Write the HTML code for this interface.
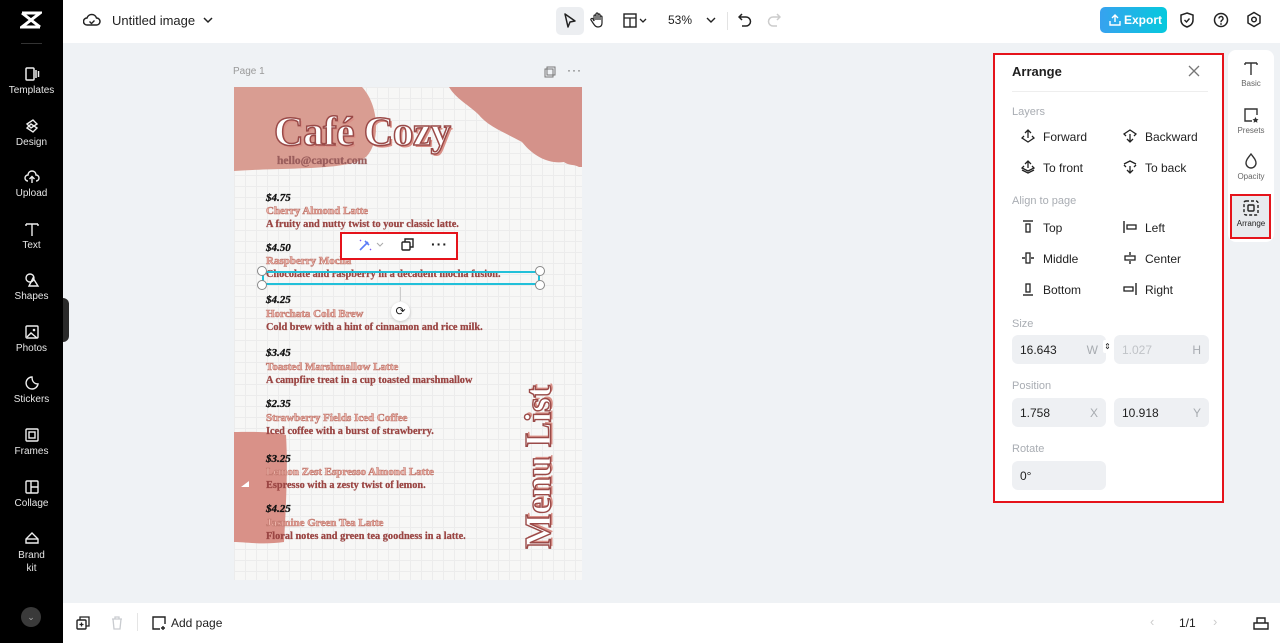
<!DOCTYPE html>
<html><head><meta charset="utf-8"><style>
*{margin:0;padding:0;box-sizing:border-box}
body{width:1280px;height:643px;overflow:hidden;background:#eff2f5;font-family:"Liberation Sans",sans-serif;position:relative;color:#1f1f1f}
.abs{position:absolute}
.side{left:0;top:0;width:63px;height:643px;background:#000}
.si{position:absolute;left:0;width:63px;text-align:center;color:#e6e6e6;font-size:10px}
.si svg{display:block;margin:0 auto 3px}
.top{left:63px;top:0;width:1217px;height:43px;background:#fff}
.bot{left:63px;top:603px;width:1217px;height:40px;background:#fff}
.page{left:234px;top:87px;width:348px;height:493px;background-color:#f7f7f6;
background-image:linear-gradient(#ececec 1px,transparent 1px),linear-gradient(90deg,#ececec 1px,transparent 1px);background-size:11px 11px;overflow:hidden}
.sf{font-family:"Liberation Serif","DejaVu Serif",serif;font-weight:bold}
.pr{position:absolute;left:32px;font-size:11px;font-style:italic;color:#111;-webkit-text-stroke:.3px #111}
.nm{position:absolute;left:32px;font-size:11px;color:#f0b6ac;-webkit-text-stroke:.6px #c27a70}
.ds{position:absolute;left:32px;font-size:10.3px;color:#9a4543;-webkit-text-stroke:.25px #9a4543}
.pn{position:absolute;left:993px;top:53px;width:231px;height:450px;border:2px solid #e5131b;background:#fff}
.lbl{position:absolute;left:17px;font-size:11px;color:#a9adb3}
.it{position:absolute;font-size:12px;color:#1f1f1f}
.it svg{position:absolute;left:-22px;top:-1px}
.fld{position:absolute;height:29px;background:#eef0f3;border-radius:6px;font-size:12px;padding:8px 0 0 8px}
.fld i{position:absolute;right:8px;top:8px;font-style:normal;color:#a7abb0}
.tab{position:absolute;left:1230px;width:42px;text-align:center;font-size:8px;color:#666}
</style></head><body>
<div class="abs side">
 <svg class="abs" style="left:20px;top:11px" width="22" height="18" viewBox="0 0 22 18"><path d="M2 2h18L2 16h18M2 2l18 14M20 2L2 16" stroke="#fff" stroke-width="3" fill="none"/></svg>
 <div class="abs" style="left:21px;top:43px;width:21px;height:1px;background:#333"></div>
 <div class="si" style="top:66px"><svg width="16" height="16"><rect x="2" y="2" width="8" height="12" rx="1" stroke="#eee" fill="none" stroke-width="1.5"/><path d="M12 4v8M14.5 5v6" stroke="#eee" stroke-width="1.5"/></svg>Templates</div>
 <div class="si" style="top:118px"><svg width="16" height="16"><path d="M3 6l6-4 4 4-6 4zM3 10l6 4 4-4-6-4z" stroke="#eee" fill="none" stroke-width="1.4"/></svg>Design</div>
 <div class="si" style="top:169px"><svg width="16" height="16"><path d="M4 12a3 3 0 010-6 4 4 0 018 0 3 3 0 010 6M8 14V8M5.5 10L8 7.5 10.5 10" stroke="#eee" fill="none" stroke-width="1.4"/></svg>Upload</div>
 <div class="si" style="top:221px"><svg width="16" height="16"><path d="M2 3h12M8 3v12M2 3v2M14 3v2" stroke="#eee" fill="none" stroke-width="1.4"/></svg>Text</div>
 <div class="si" style="top:272px"><svg width="16" height="16"><circle cx="6" cy="6" r="4" stroke="#eee" fill="none" stroke-width="1.4"/><path d="M9 6l5 8H5z" stroke="#eee" fill="none" stroke-width="1.4"/></svg>Shapes</div>
 <div class="si" style="top:324px"><svg width="16" height="16"><rect x="2" y="2" width="12" height="12" rx="1" stroke="#eee" fill="none" stroke-width="1.4"/><path d="M3 13l4-4 6 5" stroke="#eee" fill="none" stroke-width="1.4"/><circle cx="10" cy="6" r="1.3" fill="#eee"/></svg>Photos</div>
 <div class="si" style="top:375px"><svg width="16" height="16"><path d="M14 9A6 6 0 118 2c0 4 2 7 6 7z" stroke="#eee" fill="none" stroke-width="1.4"/></svg>Stickers</div>
 <div class="si" style="top:427px"><svg width="16" height="16"><rect x="2" y="2" width="12" height="12" rx="1" stroke="#eee" fill="none" stroke-width="1.4"/><rect x="5" y="5" width="6" height="6" stroke="#eee" fill="none" stroke-width="1.4"/></svg>Frames</div>
 <div class="si" style="top:479px"><svg width="16" height="16"><rect x="2" y="2" width="12" height="12" rx="1" stroke="#eee" fill="none" stroke-width="1.4"/><path d="M7 2v12M7 8h7" stroke="#eee" stroke-width="1.4"/></svg>Collage</div>
 <div class="si" style="top:530px;line-height:13px"><svg width="16" height="16"><path d="M2 13V9l6-6 6 6v4z" stroke="#eee" fill="none" stroke-width="1.4"/><path d="M2 9h12" stroke="#eee" stroke-width="1.4"/></svg>Brand<br>kit</div>
 <div class="abs" style="left:21px;top:607px;width:20px;height:20px;border-radius:50%;background:#3a3a3a;color:#aaa;font-size:9px;text-align:center;line-height:20px">⌄</div>
</div>
<div class="abs" style="left:63px;top:298px;width:6px;height:44px;background:#2a2a2a;border-radius:0 6px 6px 0"></div>
<div class="abs top">
 <svg class="abs" style="left:20px;top:12px" width="18" height="16"><path d="M4 13a3.5 3.5 0 010-7 5 5 0 019.5 0 3.5 3.5 0 010 7z" stroke="#222" fill="none" stroke-width="1.5"/><path d="M6.5 9.5l2 2 3-3" stroke="#222" fill="none" stroke-width="1.4"/></svg>
 <div class="abs" style="left:49px;top:13px;font-size:13px">Untitled image</div>
 <svg class="abs" style="left:140px;top:16px" width="10" height="8"><path d="M1 2l4 4 4-4" stroke="#222" fill="none" stroke-width="1.5"/></svg>
 <div class="abs" style="left:493px;top:7px;width:28px;height:28px;background:#eceef1;border-radius:5px"></div>
 <svg class="abs" style="left:499px;top:12px" width="16" height="18"><path d="M3 2l10 7-5 1-2 5z" stroke="#222" fill="none" stroke-width="1.5" stroke-linejoin="round"/></svg>
 <svg class="abs" style="left:527px;top:11px" width="16" height="18"><path d="M4 10V5a1 1 0 012 0v4V3a1 1 0 012 0v6V4a1 1 0 012 0v5-3a1 1 0 012 0v6c0 3-2 4-4 4s-3-1-5-4l-2-3a1 1 0 012-1z" stroke="#222" fill="none" stroke-width="1.2"/></svg>
 <svg class="abs" style="left:560px;top:13px" width="26" height="16"><rect x="1" y="1" width="12" height="13" stroke="#222" fill="none" stroke-width="1.4"/><path d="M1 5h12M7 5v9M17 6l3 3 3-3" stroke="#222" fill="none" stroke-width="1.3"/></svg>
 <div class="abs" style="left:605px;top:13px;font-size:12px">53%</div>
 <svg class="abs" style="left:643px;top:17px" width="10" height="8"><path d="M1 1l4 4 4-4" stroke="#222" fill="none" stroke-width="1.4"/></svg>
 <div class="abs" style="left:664px;top:12px;width:1px;height:18px;background:#e3e3e3"></div>
 <svg class="abs" style="left:675px;top:12px" width="14" height="16"><path d="M4 2L1 5l3 3M1 5h7a4.5 4.5 0 010 9H4" stroke="#222" fill="none" stroke-width="1.5"/></svg>
 <svg class="abs" style="left:704px;top:12px" width="14" height="16"><path d="M10 2l3 3-3 3M13 5H6a4.5 4.5 0 000 9h4" stroke="#ccc" fill="none" stroke-width="1.5"/></svg>
 <div class="abs" style="left:1037px;top:7px;width:67px;height:26px;border-radius:5px;background:linear-gradient(90deg,#37a2ef,#05c9dd);color:#fff;font-size:12px;font-weight:bold;padding:6px 0 0 24px">Export</div>
 <svg class="abs" style="left:1046px;top:13px" width="12" height="14"><path d="M6 9V2M3 5l3-3 3 3M1 8v4h10V8" stroke="#fff" fill="none" stroke-width="1.4"/></svg>
 <svg class="abs" style="left:1116px;top:11px" width="16" height="18"><path d="M8 2l6 2v5c0 4-3 6-6 7-3-1-6-3-6-7V4z" stroke="#222" fill="none" stroke-width="1.5"/><path d="M5.5 9l2 2 3-3.5" stroke="#222" fill="none" stroke-width="1.4"/></svg>
 <svg class="abs" style="left:1150px;top:12px" width="16" height="16"><circle cx="8" cy="8" r="6.5" stroke="#222" fill="none" stroke-width="1.5"/><path d="M6 6.5a2 2 0 113 1.7c-1 .5-1 1-1 2" stroke="#222" fill="none" stroke-width="1.4"/><circle cx="8" cy="12" r=".9" fill="#222"/></svg>
 <svg class="abs" style="left:1183px;top:11px" width="16" height="18"><path d="M8 1.5l6 3.5v7l-6 3.5-6-3.5V5z" stroke="#222" fill="none" stroke-width="1.5"/><circle cx="8" cy="8.5" r="2.3" stroke="#222" fill="none" stroke-width="1.5"/></svg>
</div>
<div class="abs" style="left:233px;top:66px;font-size:10px;color:#999">Page 1</div>
<svg class="abs" style="left:544px;top:66px" width="12" height="12"><rect x="1" y="3" width="8" height="8" stroke="#777" fill="none"/><rect x="3" y="1" width="8" height="8" stroke="#777" fill="none"/></svg>
<div class="abs" style="left:567px;top:63px;font-size:12px;color:#555;letter-spacing:1px">···</div>
<div class="abs page">
 <svg class="abs" style="left:0;top:0" width="348" height="493">
  <path d="M0 0H128C145 18 147 55 132 70 112 84 60 80 0 84Z" fill="#d99d92"/>
  <path d="M215 0H348V80H345C340 77 335 79 330 75 315 77 300 70 288 55 270 45 255 40 245 28 235 18 222 12 215 0Z" fill="#d4928a"/>
  <path d="M0 345C15 345 35 344 52 348 54 380 52 420 50 455 30 458 10 455 0 455Z" fill="#d99188"/>
  <path d="M7 400l8 -6v6z" fill="#fff"/>
 </svg>
 <div class="abs sf" style="left:40px;top:20px;font-size:41px;color:#fff;-webkit-text-stroke:1.5px #9a4a48;text-shadow:2px 2px 0 #d98f86;letter-spacing:-.5px">Café Cozy</div>
 <div class="abs sf" style="left:43px;top:68px;font-size:11.5px;color:#9a5d5c;-webkit-text-stroke:.3px #9a5d5c">hello@capcut.com</div>
 <div class="pr sf" style="top:105px">$4.75</div><div class="nm sf" style="top:118px">Cherry Almond Latte</div><div class="ds sf" style="top:132px">A fruity and nutty twist to your classic latte.</div>
 <div class="pr sf" style="top:155px">$4.50</div><div class="nm sf" style="top:168px">Raspberry Mocha</div><div class="ds sf" style="top:182px">Chocolate and raspberry in a decadent mocha fusion.</div>
 <div class="pr sf" style="top:207px">$4.25</div><div class="nm sf" style="top:221px">Horchata Cold Brew</div><div class="ds sf" style="top:235px">Cold brew with a hint of cinnamon and rice milk.</div>
 <div class="pr sf" style="top:260px">$3.45</div><div class="nm sf" style="top:274px">Toasted Marshmallow Latte</div><div class="ds sf" style="top:288px">A campfire treat in a cup toasted marshmallow</div>
 <div class="pr sf" style="top:311px">$2.35</div><div class="nm sf" style="top:325px">Strawberry Fields Iced Coffee</div><div class="ds sf" style="top:339px">Iced coffee with a burst of strawberry.</div>
 <div class="pr sf" style="top:366px">$3.25</div><div class="nm sf" style="top:379px">Lemon Zest Espresso Almond Latte</div><div class="ds sf" style="top:393px">Espresso with a zesty twist of lemon.</div>
 <div class="pr sf" style="top:416px">$4.25</div><div class="nm sf" style="top:430px">Jasmine Green Tea Latte</div><div class="ds sf" style="top:444px">Floral notes and green tea goodness in a latte.</div>
 <div class="abs sf" style="left:305px;top:380px;transform:translate(-50%,-50%) rotate(-90deg);white-space:nowrap;font-size:37px;color:#fff;-webkit-text-stroke:1.4px #9a4a48;text-shadow:2px 2px 0 #d98f86">Menu List</div>
</div>
<div class="abs" style="left:262px;top:271px;width:278px;height:14px;border:2px solid #22c0d9"></div>
<div class="abs" style="left:257px;top:266px;width:10px;height:10px;border-radius:50%;background:#fff;border:1px solid #888"></div>
<div class="abs" style="left:535px;top:266px;width:10px;height:10px;border-radius:50%;background:#fff;border:1px solid #888"></div>
<div class="abs" style="left:257px;top:280px;width:10px;height:10px;border-radius:50%;background:#fff;border:1px solid #888"></div>
<div class="abs" style="left:535px;top:280px;width:10px;height:10px;border-radius:50%;background:#fff;border:1px solid #888"></div>
<div class="abs" style="left:400px;top:287px;width:1px;height:14px;background:#ccc"></div>
<div class="abs" style="left:391px;top:302px;width:19px;height:19px;border-radius:50%;background:#fff;box-shadow:0 1px 3px rgba(0,0,0,.2);font-size:12px;text-align:center;line-height:19px">⟳</div>
<div class="abs" style="left:340px;top:232px;width:118px;height:28px;border:2px solid #e5131b;background:#fff"></div>
<svg class="abs" style="left:357px;top:237px" width="28" height="16"><path d="M3 13L11 5M8 4l4 4" stroke="#5b7cf7" stroke-width="1.6" fill="none"/><path d="M3 3l1 1M13 12l1 1" stroke="#7b5cf7" stroke-width="1.4"/><path d="M20 6l3 3 3-3" stroke="#aaa" fill="none"/></svg>
<svg class="abs" style="left:401px;top:238px" width="14" height="14"><rect x="1" y="4" width="8" height="8" rx="1" stroke="#222" fill="none" stroke-width="1.4"/><path d="M4 4V1h8v8H9" stroke="#222" fill="none" stroke-width="1.4"/></svg>
<div class="abs" style="left:431px;top:236px;font-size:14px;font-weight:bold;letter-spacing:1px">···</div>
<div class="pn">
 <div class="abs" style="left:17px;top:9px;font-size:13px;font-weight:bold">Arrange</div>
 <svg class="abs" style="left:193px;top:10px" width="12" height="12"><path d="M1 1l10 10M11 1L1 11" stroke="#777" stroke-width="1.3"/></svg>
 <div class="abs" style="left:17px;top:36px;width:196px;height:1px;background:#eee"></div>
 <div class="lbl" style="top:51px">Layers</div>
 <div class="it" style="left:48px;top:75px"><svg width="14" height="14"><path d="M7 1v8M4 4l3-3 3 3M3 7L1 9l6 4 6-4-2-2" stroke="#222" fill="none" stroke-width="1.3"/></svg>Forward</div>
 <div class="it" style="left:150px;top:75px"><svg width="14" height="14"><path d="M7 13V5M4 10l3 3 3-3M3 7L1 5l6-4 6 4-2 2" stroke="#222" fill="none" stroke-width="1.3"/></svg>Backward</div>
 <div class="it" style="left:48px;top:106px"><svg width="14" height="14"><path d="M7 1v7M4 4l3-3 3 3M3 6L1 8l6 3 6-3-2-2M1 10l6 3 6-3" stroke="#222" fill="none" stroke-width="1.3"/></svg>To front</div>
 <div class="it" style="left:150px;top:106px"><svg width="14" height="14"><path d="M7 13V6M4 10l3 3 3-3M1 4l6-3 6 3M3 7L1 5M11 7l2-2" stroke="#222" fill="none" stroke-width="1.3"/></svg>To back</div>
 <div class="lbl" style="top:140px">Align to page</div>
 <div class="it" style="left:48px;top:166px"><svg width="14" height="14"><path d="M2 1h10" stroke="#222" stroke-width="1.4"/><rect x="5" y="4" width="4" height="8" stroke="#222" fill="none" stroke-width="1.3"/></svg>Top</div>
 <div class="it" style="left:150px;top:166px"><svg width="14" height="14"><path d="M1 1v12" stroke="#222" stroke-width="1.4"/><rect x="4" y="5" width="9" height="4" stroke="#222" fill="none" stroke-width="1.3"/></svg>Left</div>
 <div class="it" style="left:48px;top:197px"><svg width="14" height="14"><path d="M1 7h3M10 7h3" stroke="#222" stroke-width="1.4"/><rect x="5" y="2" width="4" height="10" stroke="#222" fill="none" stroke-width="1.3"/></svg>Middle</div>
 <div class="it" style="left:150px;top:197px"><svg width="14" height="14"><path d="M7 1v3M7 10v3" stroke="#222" stroke-width="1.4"/><rect x="2" y="5" width="10" height="4" stroke="#222" fill="none" stroke-width="1.3"/></svg>Center</div>
 <div class="it" style="left:48px;top:228px"><svg width="14" height="14"><path d="M2 13h10" stroke="#222" stroke-width="1.4"/><rect x="5" y="2" width="4" height="8" stroke="#222" fill="none" stroke-width="1.3"/></svg>Bottom</div>
 <div class="it" style="left:150px;top:228px"><svg width="14" height="14"><path d="M13 1v12" stroke="#222" stroke-width="1.4"/><rect x="1" y="5" width="9" height="4" stroke="#222" fill="none" stroke-width="1.3"/></svg>Right</div>
 <div class="lbl" style="top:263px">Size</div>
 <div class="fld" style="left:17px;top:280px;width:94px">16.643<i>W</i></div>
 <div class="fld" style="left:119px;top:280px;width:95px;color:#c0c3c7">1.027<i>H</i></div>
 <div class="abs" style="left:108px;top:285px;width:9px;height:13px;background:#fff;border-radius:2px;font-size:8px;text-align:center;line-height:13px">⇕</div>
 <div class="lbl" style="top:325px">Position</div>
 <div class="fld" style="left:17px;top:343px;width:94px">1.758<i>X</i></div>
 <div class="fld" style="left:119px;top:343px;width:95px">10.918<i>Y</i></div>
 <div class="lbl" style="top:388px">Rotate</div>
 <div class="fld" style="left:17px;top:406px;width:94px">0°</div>
</div>
<div class="abs" style="left:1228px;top:50px;width:46px;height:192px;background:#fff;border-radius:8px"></div>
<div class="tab" style="top:60px"><svg width="16" height="16" style="display:block;margin:0 auto 3px"><path d="M2 3h12M8 3v12M2 3v2M14 3v2" stroke="#333" fill="none" stroke-width="1.4"/></svg>Basic</div>
<div class="tab" style="top:107px"><svg width="16" height="16" style="display:block;margin:0 auto 3px"><path d="M14 8V2H2v12h7" stroke="#333" fill="none" stroke-width="1.4"/><path d="M12.5 10l1 2 2 .3-1.5 1.4.4 2-1.9-1-1.9 1 .4-2-1.5-1.4 2-.3z" fill="#333"/></svg>Presets</div>
<div class="tab" style="top:153px"><svg width="16" height="16" style="display:block;margin:0 auto 3px"><path d="M8 1C5 5 3 7 3 10a5 5 0 0010 0c0-3-2-5-5-9z" stroke="#333" fill="none" stroke-width="1.4"/></svg>Opacity</div>
<div class="abs" style="left:1230px;top:194px;width:41px;height:45px;border:2px solid #e5131b;background:#e8eaee"></div>
<div class="tab" style="top:200px;color:#222"><svg width="16" height="16" style="display:block;margin:0 auto 3px"><rect x="1" y="1" width="14" height="14" rx="2" stroke="#222" fill="none" stroke-width="1.4" stroke-dasharray="3 2"/><rect x="5" y="5" width="6" height="6" rx="1" stroke="#222" fill="none" stroke-width="1.4"/></svg>Arrange</div>
<div class="abs bot">
 <svg class="abs" style="left:13px;top:13px" width="14" height="14"><rect x="1" y="4" width="9" height="9" rx="1" stroke="#222" fill="none" stroke-width="1.4"/><path d="M4 4V1h9v9h-3M5.5 6.5v4M3.5 8.5h4" stroke="#222" fill="none" stroke-width="1.3"/></svg>
 <svg class="abs" style="left:47px;top:13px" width="14" height="14"><path d="M2 3h10M5 3V1h4v2M3 3l1 10h6l1-10" stroke="#c9ccd0" fill="none" stroke-width="1.3"/></svg>
 <div class="abs" style="left:74px;top:10px;width:1px;height:18px;background:#e5e5e5"></div>
 <svg class="abs" style="left:88px;top:12px" width="16" height="16"><path d="M9 14H2V2h12v7M12 11v4M10 13h4" stroke="#222" fill="none" stroke-width="1.4"/></svg>
 <div class="abs" style="left:108px;top:13px;font-size:12px">Add page</div>
 <div class="abs" style="left:1087px;top:11px;font-size:13px;color:#ccc">‹</div>
 <div class="abs" style="left:1116px;top:13px;font-size:12px">1/1</div>
 <div class="abs" style="left:1150px;top:11px;font-size:13px;color:#ccc">›</div>
 <svg class="abs" style="left:1190px;top:13px" width="16" height="14"><path d="M1 7h14v6H1zM4 7V2h8v5" stroke="#222" fill="none" stroke-width="1.4"/></svg>
</div>
</body></html>
